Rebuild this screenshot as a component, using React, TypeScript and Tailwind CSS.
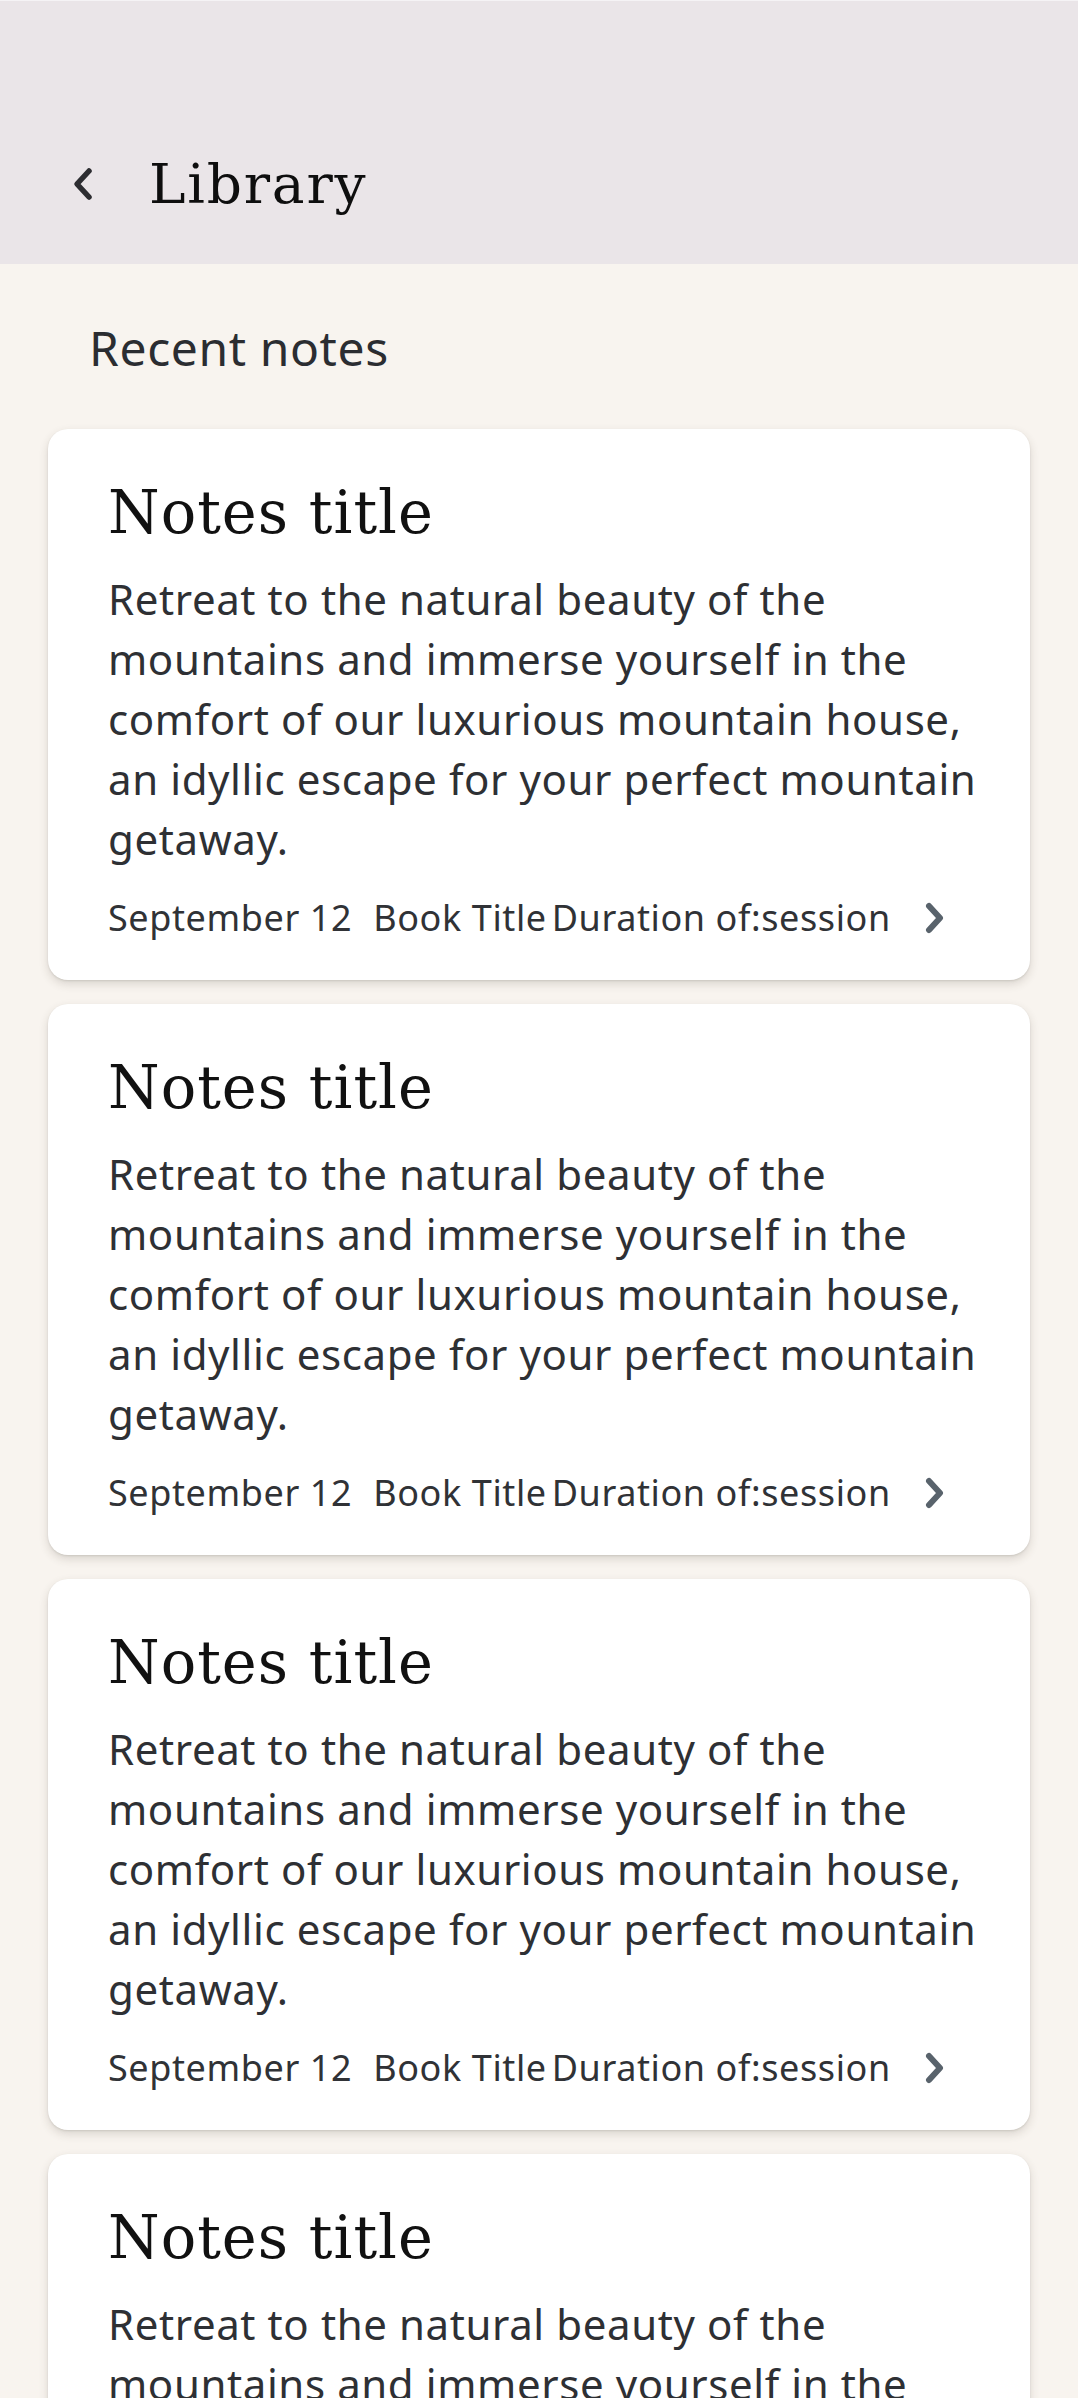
const notes = [1, 2, 3, 4];

function BackIcon() {
  return (
    <svg width="22" height="34" viewBox="0 0 22 34" fill="none">
      <polyline
        points="17,4 5,17 17,30"
        stroke="#2d2d31"
        strokeWidth="5.5"
        strokeLinecap="round"
        strokeLinejoin="round"
      />
    </svg>
  );
}

function NextIcon() {
  return (
    <svg width="22" height="32" viewBox="0 0 22 32" fill="none">
      <polyline
        points="5,4 16,16 5,28"
        stroke="#59636c"
        strokeWidth="6"
        strokeLinecap="round"
        strokeLinejoin="round"
      />
    </svg>
  );
}

function NoteCard() {
  return (
    <div className="bg-white rounded-[20px] pt-[49px] pb-[38px] pl-[60px] pr-[36px] shadow-[0_1px_2px_rgba(60,50,40,0.12),0_4px_10px_rgba(60,50,40,0.16)]">
      <h2 className="font-['DejaVu_Serif',serif] text-[59px] leading-[70px] tracking-[1px] text-[#111111]">
        Notes title
      </h2>
      <p className="mt-[21px] font-['Noto_Sans',sans-serif] text-[42px] leading-[60px] tracking-[0.6px] text-[#2e3034]">
        Retreat to the natural beauty of the mountains and immerse yourself in the
        comfort of our luxurious mountain house, an idyllic escape for your perfect
        mountain getaway.
      </p>
      <div className="mt-[25px] flex items-center font-['Noto_Sans',sans-serif] text-[36px] leading-[48px] tracking-[0.6px] text-[#303236] whitespace-nowrap">
        <span>September 12</span>
        <span className="ml-[21px]">Book Title</span>
        <span className="ml-[5px]">Duration of:session</span>
        <span className="ml-[33px] flex items-center">
          <NextIcon />
        </span>
      </div>
    </div>
  );
}

export default function App() {
  return (
    <div className="h-[2398px] overflow-hidden bg-[#f8f4ef]">
      {/* top bar */}
      <header className="h-[264px] bg-[#eae5e8] border-t border-[#f5f3f5] pt-[151px] pl-[72px] flex items-start">
        <div className="h-[64px] flex items-center mb-[6px]">
          <BackIcon />
        </div>
        <h1 className="ml-[55px] font-['DejaVu_Serif',serif] text-[55px] leading-[64px] tracking-[1.8px] text-[#0e0e0e]">
          Library
        </h1>
      </header>

      <div className="pt-[52px] pl-[89px] font-['Noto_Sans',sans-serif] text-[48px] leading-[64px] tracking-[0.6px] text-[#2b2d31]">
        Recent notes
      </div>

      <div className="mt-[49px] px-[48px] flex flex-col gap-[24px]">
        {notes.map((n) => (
          <NoteCard key={n} />
        ))}
      </div>
    </div>
  );
}
